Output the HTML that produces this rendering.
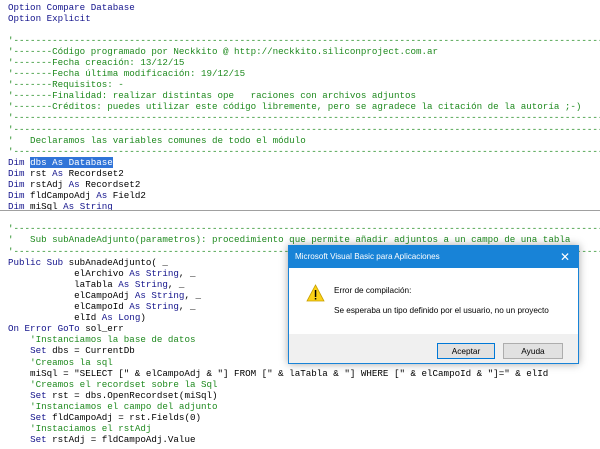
<!DOCTYPE html>
<html><head><meta charset="utf-8"><style>
body{margin:0;width:600px;height:449px;overflow:hidden;background:#fff;position:relative}
pre{position:absolute;left:8px;top:1.5px;margin:0;font-family:"Liberation Mono",monospace;font-size:9.2px;line-height:11.1px;color:#000;white-space:pre;width:600px;overflow:hidden}
.k{color:#14148c}.c{color:#1f8a1f}.s{background:#3074d8;color:#fff}
.sep{position:absolute;left:0;top:210px;width:600px;height:1px;background:#a0a0a0}
.dlg{position:absolute;left:288px;top:245px;width:289px;height:117px;background:#fff;border:1px solid #1883d7;box-shadow:0 0 8px rgba(0,0,0,.35);font-family:"Liberation Sans",sans-serif}
.tb{height:22px;background:#1883d7;color:#fff;font-size:8.1px;line-height:22px;padding-left:6px;position:relative}
.x{position:absolute;right:8px;top:0;font-size:12px}
.ft{position:absolute;left:0;bottom:0;width:100%;height:29px;background:#f0f0f0}
.btn{position:absolute;top:97px;height:14px;border:1px solid #adadad;background:#e1e1e1;font-size:8.3px;line-height:14px;text-align:center;color:#000}
.t{position:absolute;font-size:8.2px;color:#000}
</style></head><body>
<pre><span class="k">Option Compare Database</span>
<span class="k">Option Explicit</span>

<span class="c">'-----------------------------------------------------------------------------------------------------------</span>
<span class="c">'-------Código programado por Neckkito @ http://neckkito.siliconproject.com.ar</span>
<span class="c">'-------Fecha creación: 13/12/15</span>
<span class="c">'-------Fecha última modificación: 19/12/15</span>
<span class="c">'-------Requisitos: -</span>
<span class="c">'-------Finalidad: realizar distintas ope   raciones con archivos adjuntos</span>
<span class="c">'-------Créditos: puedes utilizar este código libremente, pero se agradece la citación de la autoría ;-)</span>
<span class="c">'-----------------------------------------------------------------------------------------------------------</span>
<span class="c">'-----------------------------------------------------------------------------------------------------------</span>
<span class="c">'   Declaramos las variables comunes de todo el módulo</span>
<span class="c">'-----------------------------------------------------------------------------------------------------------</span>
<span class="k">Dim</span> <span class="s">dbs <span class="k" style="color:#fff">As</span> Database</span>
<span class="k">Dim</span> rst <span class="k">As</span> Recordset2
<span class="k">Dim</span> rstAdj <span class="k">As</span> Recordset2
<span class="k">Dim</span> fldCampoAdj <span class="k">As</span> Field2
<span class="k">Dim</span> miSql <span class="k">As</span> <span class="k">String</span>

<span class="c">'-----------------------------------------------------------------------------------------------------------</span>
<span class="c">'   Sub subAnadeAdjunto(parametros): procedimiento que permite añadir adjuntos a un campo de una tabla</span>
<span class="c">'-----------------------------------------------------------------------------------------------------------</span>
<span class="k">Public Sub</span> subAnadeAdjunto( _
            elArchivo <span class="k">As String</span>, _
            laTabla <span class="k">As String</span>, _
            elCampoAdj <span class="k">As String</span>, _
            elCampoId <span class="k">As String</span>, _
            elId <span class="k">As Long</span>)
<span class="k">On Error GoTo</span> sol_err
    <span class="c">'Instanciamos la base de datos</span>
    <span class="k">Set</span> dbs = CurrentDb
    <span class="c">'Creamos la sql</span>
    miSql = "SELECT [" &amp; elCampoAdj &amp; "] FROM [" &amp; laTabla &amp; "] WHERE [" &amp; elCampoId &amp; "]=" &amp; elId
    <span class="c">'Creamos el recordset sobre la Sql</span>
    <span class="k">Set</span> rst = dbs.OpenRecordset(miSql)
    <span class="c">'Instanciamos el campo del adjunto</span>
    <span class="k">Set</span> fldCampoAdj = rst.Fields(0)
    <span class="c">'Instaciamos el rstAdj</span>
    <span class="k">Set</span> rstAdj = fldCampoAdj.Value</pre>
<div class="sep"></div>
<div class="dlg">
 <div class="tb">Microsoft Visual Basic para Aplicaciones<span class="x">✕</span></div>
 <svg style="position:absolute;left:17px;top:38px" width="19" height="18" viewBox="0 0 19 18"><path d="M9.5 1 L18 17 L1 17 Z" fill="#fcd116" stroke="#c8a000" stroke-width="0.8"/><rect x="8.8" y="6" width="1.5" height="7" fill="#000"/><rect x="8.8" y="14" width="1.5" height="1.5" fill="#000"/></svg>
 <div class="t" style="left:45px;top:40px">Error de compilación:</div>
 <div class="t" style="left:45px;top:60px">Se esperaba un tipo definido por el usuario, no un proyecto</div>
 <div class="ft"></div>
 <div class="btn" style="left:148px;width:56px;border-color:#0078d7">Aceptar</div>
 <div class="btn" style="left:214px;width:58px">Ayuda</div>
</div>
</body></html>
